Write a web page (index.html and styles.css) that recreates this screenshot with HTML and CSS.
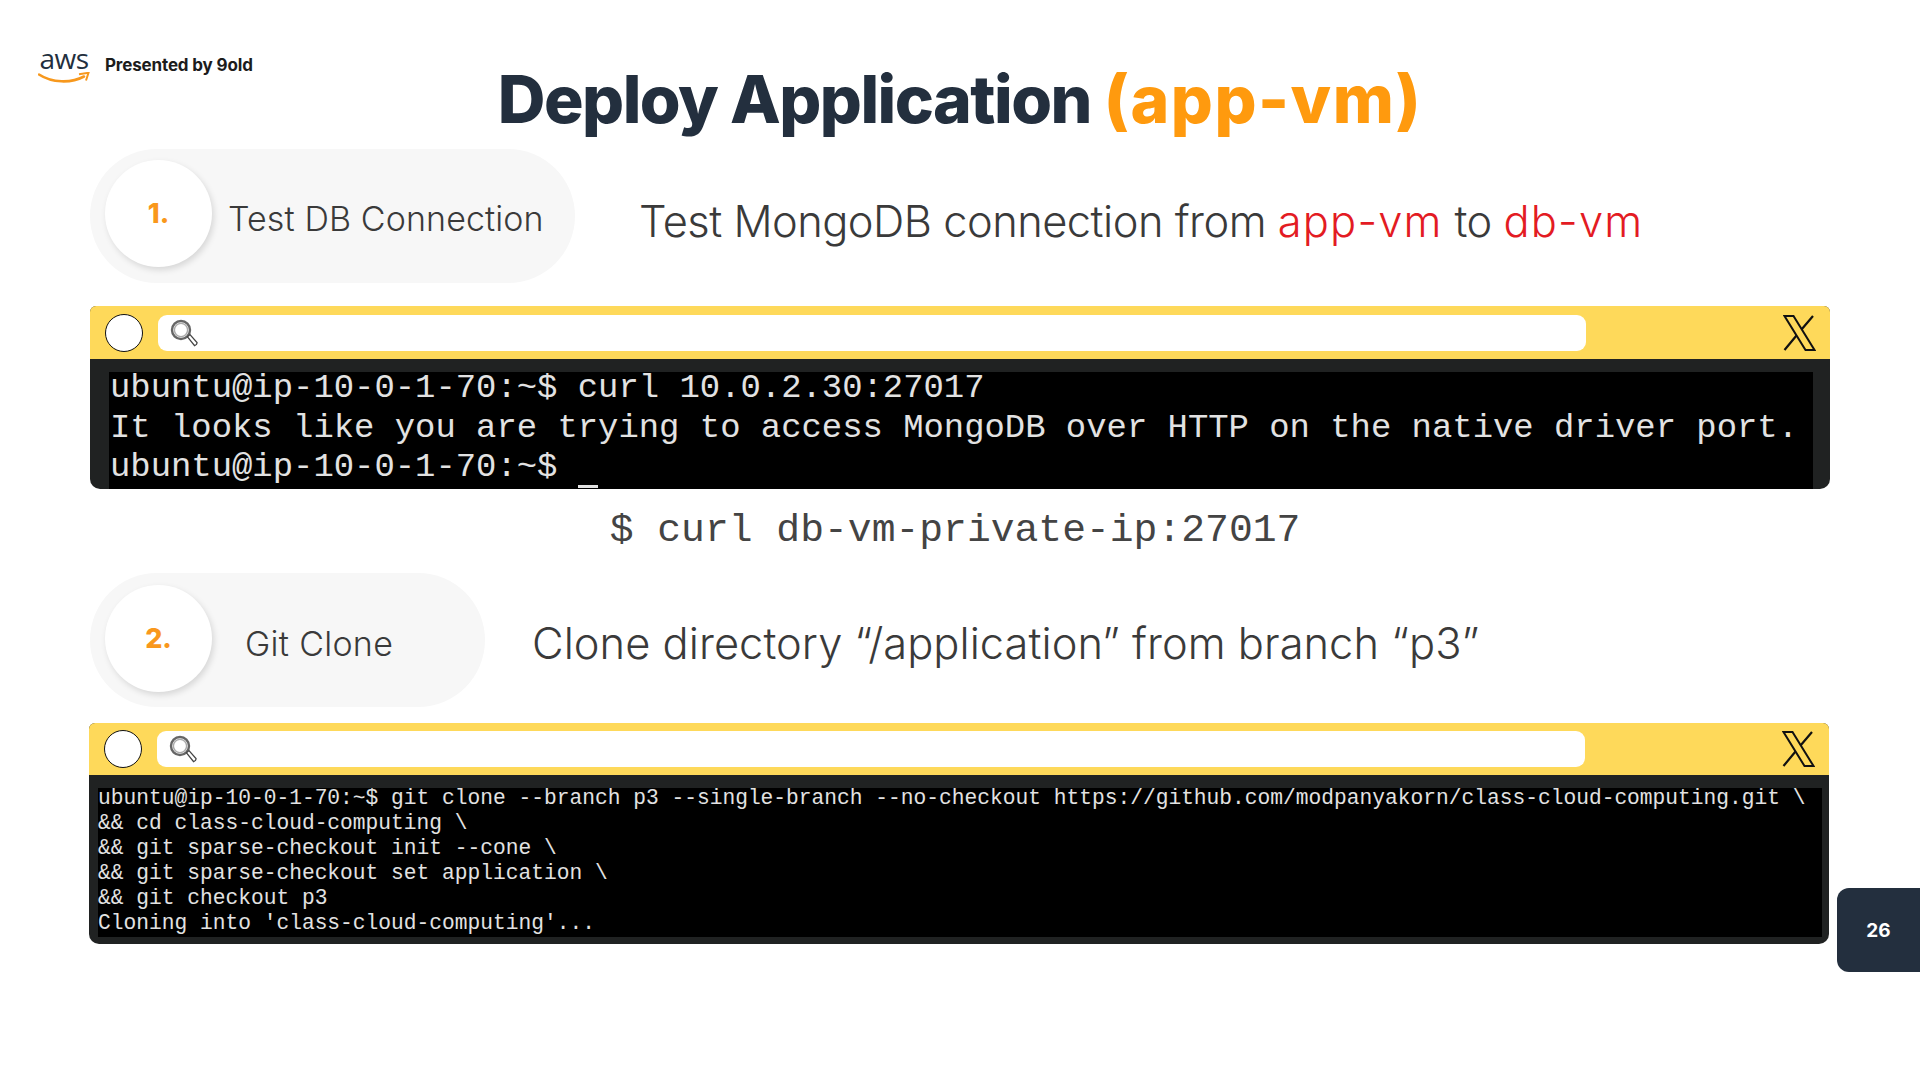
FILE: index.html
```html
<!DOCTYPE html>
<html lang="en">
<head>
<meta charset="utf-8">
<title>Deploy Application (app-vm)</title>
<link rel="stylesheet" href="styles.css">
</head>
<body>
<main class="slide">
  <header class="header">
    <div class="brand">
      <div class="aws">
        <span class="aws-word">aws</span>
        <svg class="aws-smile" viewBox="0 0 52 12" aria-hidden="true"><path d="M1 2.5C14 11 33 11.5 46 4.5" fill="none" stroke="#f7981d" stroke-width="2.6" stroke-linecap="round"/><path d="M41 2.2 L50.5 0.8 L48 8.5" fill="none" stroke="#f7981d" stroke-width="2"/></svg>
      </div>
      <span class="presented">Presented by 9old</span>
    </div>
    <h1 class="title">Deploy Application <span class="accent">(app-vm)</span></h1>
  </header>

  <section class="step step-one">
    <div class="pill pill-one">
      <div class="num-circle circle-one"><span class="num">1.</span></div>
      <span class="pill-label label-one">Test DB Connection</span>
    </div>
    <p class="lead lead-one">Test MongoDB connection from <span class="red">app-vm</span> to <span class="red">db-vm</span></p>
  </section>

  <section class="terminal term-one">
    <div class="term-bar">
      <span class="dot"></span>
      <div class="search">
        <svg class="lens" viewBox="0 0 28 28" aria-hidden="true"><circle cx="11" cy="11" r="9" fill="#fff" stroke="#666" stroke-width="2.4"/><circle cx="11" cy="11" r="6.6" fill="none" stroke="#aaa" stroke-width="1.4"/><path d="M17.5 17.8 L20 15.6 L27 23.5 Q27.4 25.5 24.6 26.6 Z" fill="#fff" stroke="#444" stroke-width="1.3"/></svg>
      </div>
      <svg class="close" viewBox="0 0 33 36" aria-hidden="true"><path d="M1.5 1H10.5L31.5 35H22.5Z" fill="none" stroke="#111" stroke-width="2"/><path d="M30 1 L18.5 14.5 M13.5 20.5 L1.5 35" fill="none" stroke="#111" stroke-width="2.2"/></svg>
    </div>
    <div class="term-body">
<pre class="screen screen-large">ubuntu@ip-10-0-1-70:~$ curl 10.0.2.30:27017
It looks like you are trying to access MongoDB over HTTP on the native driver port.
ubuntu@ip-10-0-1-70:~$ <span class="cursor"></span></pre>
    </div>
  </section>

  <p class="command">$ curl db-vm-private-ip:27017</p>

  <section class="step step-two">
    <div class="pill pill-two">
      <div class="num-circle circle-two"><span class="num">2.</span></div>
      <span class="pill-label label-two">Git Clone</span>
    </div>
    <p class="lead lead-two">Clone directory “/application” from branch “p3”</p>
  </section>

  <section class="terminal term-two">
    <div class="term-bar">
      <span class="dot"></span>
      <div class="search">
        <svg class="lens" viewBox="0 0 28 28" aria-hidden="true"><circle cx="11" cy="11" r="9" fill="#fff" stroke="#666" stroke-width="2.4"/><circle cx="11" cy="11" r="6.6" fill="none" stroke="#aaa" stroke-width="1.4"/><path d="M17.5 17.8 L20 15.6 L27 23.5 Q27.4 25.5 24.6 26.6 Z" fill="#fff" stroke="#444" stroke-width="1.3"/></svg>
      </div>
      <svg class="close" viewBox="0 0 33 36" aria-hidden="true"><path d="M1.5 1H10.5L31.5 35H22.5Z" fill="none" stroke="#111" stroke-width="2"/><path d="M30 1 L18.5 14.5 M13.5 20.5 L1.5 35" fill="none" stroke="#111" stroke-width="2.2"/></svg>
    </div>
    <div class="term-body term-body-small">
<pre class="screen screen-small">ubuntu@ip-10-0-1-70:~$ git clone --branch p3 --single-branch --no-checkout https://github.com/modpanyakorn/class-cloud-computing.git \
&amp;&amp; cd class-cloud-computing \
&amp;&amp; git sparse-checkout init --cone \
&amp;&amp; git sparse-checkout set application \
&amp;&amp; git checkout p3
Cloning into 'class-cloud-computing'...</pre>
    </div>
  </section>

  <div class="page-tab">26</div>
</main>
</body>
</html>
```
FILE: styles.css
```css
* { box-sizing: border-box; }
html, body { margin: 0; padding: 0; background: #fff; }
.slide {
  position: relative;
  width: 1920px;
  height: 1080px;
  overflow: hidden;
  background: #fff;
  font-family: Inter, "Noto Sans", sans-serif;
  color: #3a3a3a;
}
.header {
  display: grid;
  grid-template-columns: 1fr auto 1fr;
  height: 149px;
}
.brand {
  grid-column: 1;
  grid-row: 1;
  display: flex;
  align-items: flex-start;
  gap: 15px;
  padding: 46px 0 0 38px;
}
.aws { width: 52px; display: flex; flex-direction: column; align-items: center; }
.aws-word {
  font-family: "Open Sans", sans-serif;
  font-size: 28px;
  line-height: 24px;
  letter-spacing: -0.6px;
  color: #232f3e;
}
.aws-smile { width: 52px; height: 12px; display: block; margin-top: 2px; }
.presented {
  margin-top: 8px;
  font-size: 17px;
  line-height: 22px;
  font-weight: 700;
  letter-spacing: -0.15px;
  color: #1c1c1c;
}
.title {
  grid-column: 2;
  grid-row: 1;
  margin: 61px 0 0;
  font-size: 66px;
  line-height: 76px;
  font-weight: 800;
  letter-spacing: -1.55px;
  white-space: nowrap;
  color: #232f3e;
}
.accent { color: #ff9a0e; letter-spacing: 1.5px; }
.step { display: flex; align-items: center; padding-left: 90px; }
.step-one { height: 134px; }
.step-two { height: 134px; margin-top: 18px; }
.pill {
  display: flex;
  align-items: center;
  height: 134px;
  padding-left: 15px;
  border-radius: 67px;
  background: #f7f7f7;
}
.pill-one { width: 485px; }
.pill-two { width: 395px; }
.num-circle {
  display: flex;
  align-items: center;
  justify-content: center;
  width: 107px;
  height: 107px;
  flex: none;
  border-radius: 50%;
  background: #fff;
  box-shadow: 2px 3px 6px rgba(0, 0, 0, 0.13);
}
.circle-one { margin-top: -5px; }
.circle-two { margin-top: -3px; }
.num {
  font-size: 27px;
  line-height: 32px;
  font-weight: 800;
  color: #f9981c;
}
.pill-label {
  font-size: 34px;
  line-height: 40px;
  font-weight: 300;
  letter-spacing: 0.3px;
  white-space: nowrap;
}
.label-one { margin: 5px 0 0 16px; letter-spacing: 0.1px; }
.label-two { margin: 7px 0 0 33px; }
.lead {
  font-size: 43.4px;
  line-height: 50px;
  font-weight: 300;
  white-space: nowrap;
}
.lead-one { margin: 9px 0 0 64px; letter-spacing: -0.5px; }
.lead-two { margin: 6px 0 0 47px; letter-spacing: 0.05px; }
.red { color: #e31b23; letter-spacing: 1.2px; }
.terminal {
  width: 1740px;
  border-radius: 6px 6px 10px 10px;
  background: #202222;
}
.term-one { margin: 23px 0 0 90px; height: 183px; }
.term-two { margin: 16px 0 0 89px; height: 221px; }
.term-bar {
  display: flex;
  align-items: center;
  height: 53px;
  padding-left: 15px;
  border-radius: 6px 6px 0 0;
  background: #fed95a;
}
.term-two .term-bar { height: 52px; }
.dot {
  width: 38px;
  height: 38px;
  flex: none;
  border: 1.5px solid #111;
  border-radius: 50%;
  background: #fff;
}
.search {
  display: flex;
  align-items: center;
  width: 1428px;
  height: 36px;
  margin-left: 15px;
  padding-left: 12px;
  border-radius: 9px;
  background: #fff;
}
.lens { width: 28px; height: 28px; display: block; }
.close { width: 33px; height: 36px; margin-left: 197px; flex: none; display: block; }
.term-body {
  display: flow-root;
  height: 117px;
  margin: 13px 17px 0 19px;
  background: #000;
}
.term-body-small {
  height: 149px;
  margin: 13px 7px 0 9px;
}
.screen {
  margin: 0;
  font-family: "Liberation Mono", monospace;
  color: #e2e2e2;
  white-space: pre;
}
.screen-large {
  margin-top: -3px;
  padding-left: 1px;
  font-size: 33.9px;
  line-height: 39.7px;
}
.screen-small {
  margin-top: -2px;
  font-size: 21.24px;
  line-height: 25px;
}
.cursor {
  display: inline-block;
  width: 20px;
  height: 3px;
  vertical-align: -12px;
  background: #e2e2e2;
}
.command {
  margin: 18px 0 0;
  padding-right: 10px;
  height: 48px;
  text-align: center;
  font-family: "Liberation Mono", monospace;
  font-size: 39.7px;
  line-height: 47px;
  color: #444;
}
.page-tab {
  position: absolute;
  left: 1837px;
  top: 888px;
  display: flex;
  align-items: center;
  justify-content: center;
  width: 83px;
  height: 84px;
  border-radius: 12px 0 0 12px;
  background: #232f3e;
  color: #fff;
  font-size: 19px;
  font-weight: 700;
}
```
